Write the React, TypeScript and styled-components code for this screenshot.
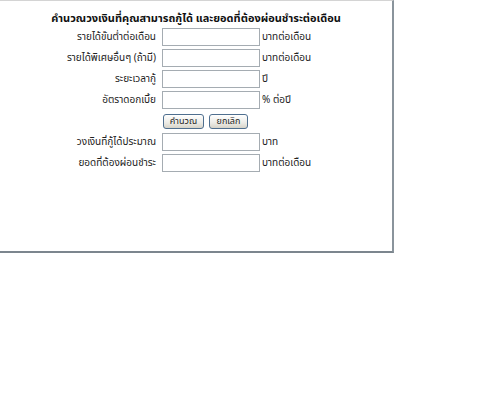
import React from "react";
import styled, { createGlobalStyle } from "styled-components";

const Global = createGlobalStyle`
  html, body { margin: 0; padding: 0; background: #ffffff; }
  body { font-family: Tahoma, "Noto Sans Thai", "Noto Sans", "DejaVu Sans", sans-serif; }
`;

const Panel = styled.div`
  box-sizing: border-box;
  width: 394px;
  height: 253px;
  border-top: 1px solid #d4d4d4;
  border-right: 2px solid #8a949c;
  border-bottom: 2px solid #7c868e;
  padding-top: 9px;
  background: #ffffff;
`;

const Title = styled.div`
  height: 18px;
  line-height: 18px;
  text-align: center;
  font-size: 11px;
  font-weight: bold;
  color: #111;
`;

const Form = styled.div`
  display: grid;
  grid-template-columns: 158px 98px auto;
  grid-auto-rows: 18px;
  row-gap: 3px;
`;

const Label = styled.div`
  text-align: right;
  padding-right: 2px;
  font-size: 10px;
  line-height: 18px;
  color: #222;
  white-space: nowrap;
`;

const Field = styled.input`
  box-sizing: border-box;
  width: 98px;
  height: 18px;
  margin: 0 0 0 4px;
  border: 1px solid #a5acb2;
  background: #fff;
  padding: 0 2px;
`;

const Unit = styled.div`
  padding-left: 6px;
  font-size: 10px;
  line-height: 18px;
  color: #222;
  white-space: nowrap;
`;

const Buttons = styled.div`
  display: flex;
  align-items: center;
  gap: 5px;
  padding-left: 5px;
`;

const Btn = styled.button<{ $w: number }>`
  box-sizing: border-box;
  width: ${(p) => p.$w}px;
  height: 15px;
  padding: 0;
  border: 1px solid #4f6f8f;
  border-radius: 3px;
  background: linear-gradient(#ffffff, #ecebe6 60%, #d6d3c8);
  font-family: inherit;
  font-size: 9px;
  line-height: 13px;
  color: #222;
`;

const rows1 = [
  { label: "รายได้ขั้นต่ำต่อเดือน", unit: "บาทต่อเดือน" },
  { label: "รายได้พิเศษอื่นๆ (ถ้ามี)", unit: "บาทต่อเดือน" },
  { label: "ระยะเวลากู้", unit: "ปี" },
  { label: "อัตราดอกเบี้ย", unit: "% ต่อปี" },
];

const rows2 = [
  { label: "วงเงินที่กู้ได้ประมาณ", unit: "บาท" },
  { label: "ยอดที่ต้องผ่อนชำระ", unit: "บาทต่อเดือน" },
];

export default function App() {
  return (
    <>
      <Global />
      <Panel>
        <Title>คำนวณวงเงินที่คุณสามารถกู้ได้ และยอดที่ต้องผ่อนชำระต่อเดือน</Title>
        <Form>
          {rows1.map((r) => (
            <React.Fragment key={r.label}>
              <Label>{r.label}</Label>
              <Field type="text" />
              <Unit>{r.unit}</Unit>
            </React.Fragment>
          ))}
          <div />
          <Buttons>
            <Btn $w={41}>คำนวณ</Btn>
            <Btn $w={39}>ยกเลิก</Btn>
          </Buttons>
          <div />
          {rows2.map((r) => (
            <React.Fragment key={r.label}>
              <Label>{r.label}</Label>
              <Field type="text" />
              <Unit>{r.unit}</Unit>
            </React.Fragment>
          ))}
        </Form>
      </Panel>
    </>
  );
}
